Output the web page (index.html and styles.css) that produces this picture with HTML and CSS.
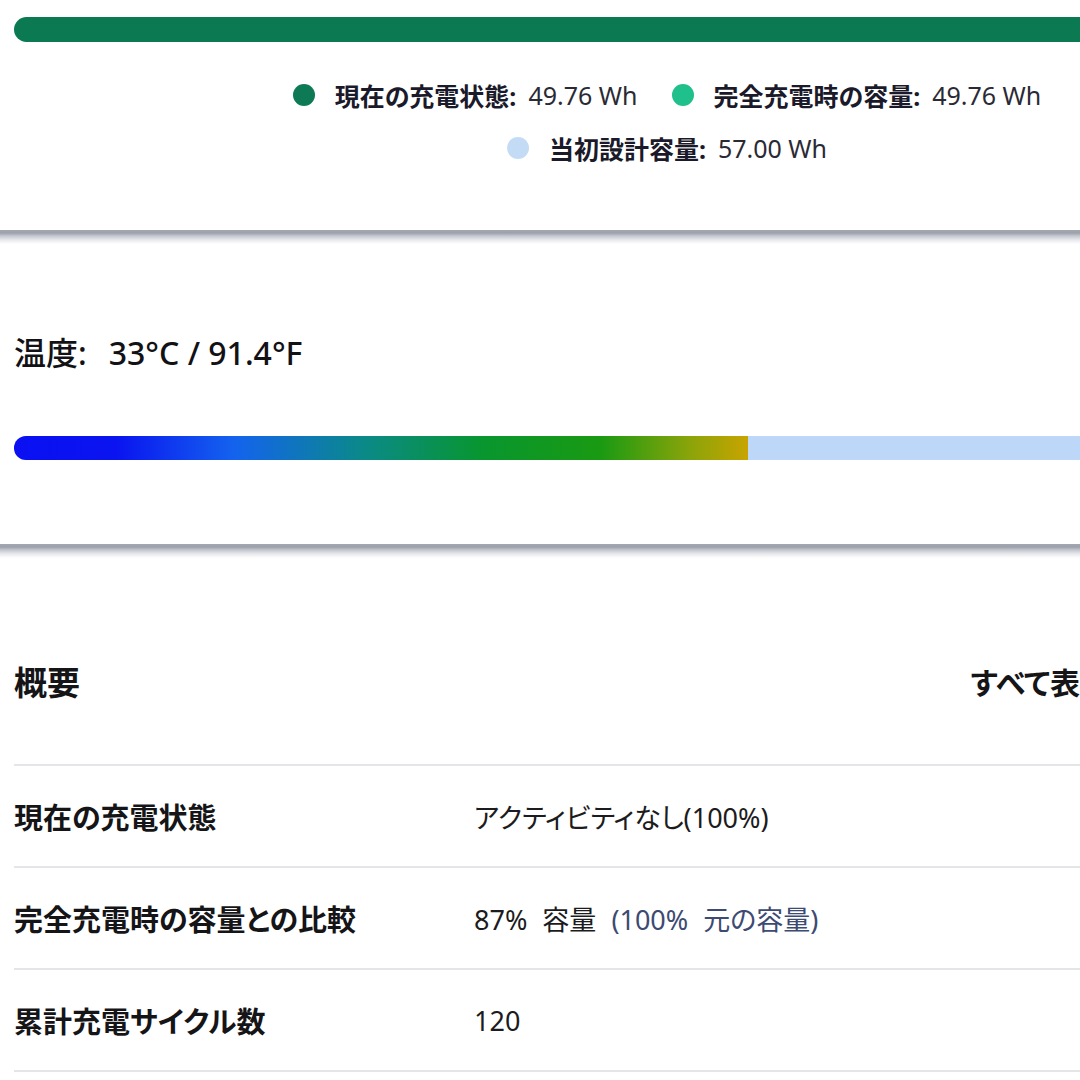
FILE: index.html
```html
<!DOCTYPE html>
<html lang="ja">
<head>
<meta charset="utf-8">
<title>バッテリー</title>
<link rel="stylesheet" href="styles.css">
</head>
<body>
<div class="page">
  <section class="card card-capacity">
    <div class="cap-bar"></div>
    <div class="legend">
      <div class="legend-item"><span class="dot dot-current"></span><b>現在の充電状態:</b><span class="val">49.76 Wh</span></div>
      <div class="legend-item"><span class="dot dot-full"></span><b>完全充電時の容量:</b><span class="val">49.76 Wh</span></div>
      <div class="legend-item"><span class="dot dot-design"></span><b>当初設計容量:</b><span class="val">57.00 Wh</span></div>
    </div>
  </section>
  <section class="card card-temp">
    <div class="temp">温度:<span class="temp-val">33°C / 91.4°F</span></div>
    <div class="temp-track"><div class="temp-fill" style="width: 67%"></div></div>
  </section>
  <section class="card card-summary">
    <div class="summary-head">
      <h2 class="summary-title">概要</h2>
      <span class="show-all">すべて表示</span>
    </div>
    <div class="row"><div class="row-label">現在の充電状態</div><div class="row-value">アクティビティなし(100%)</div></div>
    <div class="row"><div class="row-label">完全充電時の容量との比較</div><div class="row-value wide">87% 容量 <span class="muted">(100% 元の容量)</span></div></div>
    <div class="row"><div class="row-label">累計充電サイクル数</div><div class="row-value">120</div></div>
  </section>
</div>
</body>
</html>
```
FILE: styles.css
```css
html, body {
  margin: 0;
  padding: 0;
  background: #ffffff;
  overflow: hidden;
}
body {
  font-family: "Noto Sans", "Noto Sans CJK JP", sans-serif;
  color: #1b1b1f;
  font-feature-settings: "palt";
}
.page {
  width: 1124px;
}
.card {
  background: #ffffff;
  padding: 0 14px;
}
.card + .card {
  background: linear-gradient(180deg, #a3a7b0 0px, #9da1ab 3px, #c4c7ce 6px, #e8e9ed 10px, #ffffff 14px) no-repeat top left / 100% 14px, #ffffff;
}
.card-capacity {
  padding-top: 17px;
  padding-bottom: 64px;
}
.cap-bar {
  height: 25px;
  border-radius: 13px;
  background: #0b7a52;
}
.legend {
  margin-top: 35px;
  padding-left: 210px;
  display: flex;
  flex-wrap: wrap;
  justify-content: center;
  column-gap: 34px;
  row-gap: 17px;
}
.legend-item {
  display: flex;
  align-items: center;
  height: 36px;
  font-size: 25px;
  white-space: nowrap;
}
.legend-item b {
  font-weight: 700;
  color: #1a1a2a;
}
.val {
  margin-left: 12px;
  color: #2a2a35;
}
.dot {
  width: 22px;
  height: 22px;
  border-radius: 50%;
  margin-right: 20px;
}
.dot-current { background: #0e7a55; }
.dot-full { background: #1fc08b; }
.dot-design { background: #c4dbf6; }

.card-temp {
  padding-top: 102px;
  padding-bottom: 84px;
}
.temp {
  font-size: 32px;
  line-height: 42px;
  font-weight: 500;
  color: #121216;
}
.temp-val {
  margin-left: 22px;
}
.temp-track {
  margin-top: 62px;
  height: 24px;
  border-radius: 12px 0 0 12px;
  background: #bcd7f7;
  overflow: hidden;
}
.temp-fill {
  height: 100%;
  background: linear-gradient(90deg, #0a10f2 0%, #0a14f0 14%, #1463ee 30%, #0a8a86 48%, #08962e 64%, #1a9a12 80%, #8aa40a 92%, #c8a400 100%);
}

.summary-head {
  display: flex;
  justify-content: space-between;
  align-items: center;
  padding-top: 118px;
  padding-bottom: 60px;
  border-bottom: 2px solid #e4e5e9;
}
.summary-title {
  margin: 0;
  font-size: 33px;
  line-height: 42px;
  font-weight: 700;
  color: #151518;
}
.show-all {
  font-size: 30px;
  line-height: 42px;
  font-weight: 700;
  color: #151518;
}
.row {
  display: flex;
  align-items: center;
  height: 100px;
  border-bottom: 2px solid #e4e5e9;
  font-size: 27px;
}
.row-label {
  width: 460px;
  font-weight: 700;
  color: #151518;
  font-size: 29px;
}
.row-value {
  color: #1b1b20;
}
.row-value.wide {
  word-spacing: 8px;
}
.muted {
  color: #3d4a72;
}
```
